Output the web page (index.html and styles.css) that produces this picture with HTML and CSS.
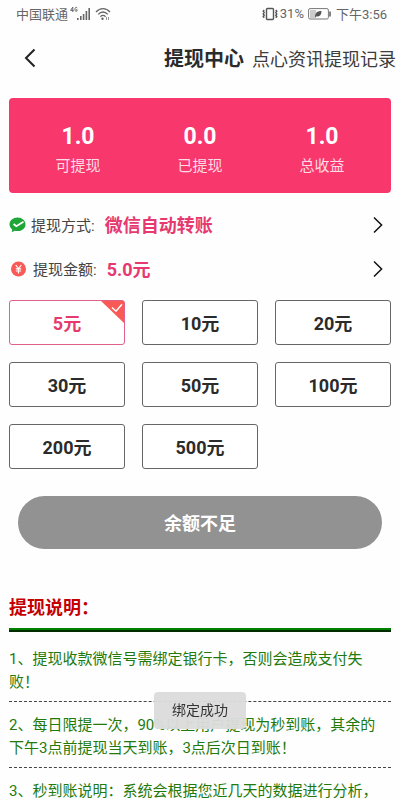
FILE: index.html
```html
<!DOCTYPE html>
<html lang="zh-CN">
<head>
<meta charset="utf-8">
<meta name="viewport" content="width=device-width, initial-scale=1">
<title>提现中心</title>
<link rel="stylesheet" href="styles.css">
</head>
<body>
<div class="status">
  <div class="status-side">
    <span class="carrier">中国联通</span>
    <svg class="signal" width="21" height="16" viewBox="0 0 21 16" aria-hidden="true">
      <g fill="none" stroke="#666" stroke-width="1"><path d="M2.8 6V1L.6 4.4h3"/><path d="M7.2 2.2C6.8.8 5 .8 5 3.4s2.2 2.8 2.2.4H6"/></g>
      <g fill="#666"><path d="M7 12h1.600v2H7zM10 10h1.600v4H10zM12.800 8h1.600v6h-1.600zM15.600 5h1.600v9h-1.600zM18.400 2h1.600v12h-1.600z"/></g>
    </svg>
    <svg class="wifi" width="16" height="14" viewBox="0 0 16 14" aria-hidden="true">
      <g fill="none" stroke="#666" stroke-width="1.300"><path d="M1 5c4-4.600 10-4.600 14 0"/><path d="M3.200 7.400c3-3.200 6.600-3.200 9.600 0"/><path d="M5.400 9.700c1.600-1.700 3.600-1.700 5.200 0"/></g>
      <circle cx="7.500" cy="11.800" r="1.200" fill="#666"/><path d="M11.500 10v3M13.500 10v3" stroke="#999"/>
    </svg>
  </div>
  <div class="status-side">
    <svg width="16" height="14" viewBox="0 0 16 14" fill="none" stroke="#555" aria-hidden="true">
      <rect x="4.500" y="1.500" width="7" height="11" rx="1" stroke-width="1.400"/>
      <path d="M2.200 3l-1 1.300 1 1.300-1 1.300 1 1.300-1 1.300 1 1.300M13.800 3l1 1.300-1 1.300 1 1.300-1 1.300 1 1.300-1 1.300" stroke-width="1.400"/>
    </svg>
    <span>31%</span>
    <svg class="battery" width="24" height="12" viewBox="0 0 24 12" aria-hidden="true">
      <rect x=".6" y=".6" width="19.800" height="10.400" rx="1.500" fill="none" stroke="#777"/>
      <path d="M2 2h6v8H2z" fill="#ccc"/><path d="M22 3.500v5" stroke="#666" stroke-width="1.600"/>
      <path d="M7 9.500c0-4.500 2-6.500 6.500-6.500 0 4-2 6-5.500 5.500z" fill="#555"/>
    </svg>
    <span>下午3:56</span>
  </div>
</div>

<header class="header">
  <button class="back" type="button" aria-label="返回">
    <svg width="12" height="20" viewBox="0 0 12 20" fill="none" stroke="#222" stroke-width="2"><path d="M10.500 1.500L2 10l8.500 8.500"/></svg>
  </button>
  <h1 class="title">提现中心</h1>
  <a class="records" href="#records">点心资讯提现记录</a>
</header>

<main class="content">
  <section class="summary">
    <div class="stat"><strong class="stat-value">1.0</strong><span class="stat-label">可提现</span></div>
    <div class="stat"><strong class="stat-value">0.0</strong><span class="stat-label">已提现</span></div>
    <div class="stat"><strong class="stat-value">1.0</strong><span class="stat-label">总收益</span></div>
  </section>

  <a class="row" href="#method">
    <svg width="17" height="16" viewBox="0 0 17 16" aria-hidden="true">
      <path d="M8.500 .5C4 .5.5 3.500.5 7.300c0 2.200 1 3.900 2.700 5.100L2.800 15.200l2.900-1.500c.9.3 1.800.4 2.800.4 4.500 0 8-2.900 8-6.700S13 .5 8.500 .5z" fill="#1fa637"/>
      <path d="M4.600 7l2.700 2.200 7.200-4.500" fill="none" stroke="#fff" stroke-width="1.800"/>
    </svg>
    <span class="row-label">提现方式:</span>
    <strong class="row-value">微信自动转账</strong>
    <svg class="chevron" width="10" height="18" viewBox="0 0 10 18" fill="none" stroke="#111" stroke-width="1.500" aria-hidden="true"><path d="M1 1.500L8.600 9 1 16.500"/></svg>
  </a>
  <a class="row" href="#amount">
    <svg class="coin" width="17" height="16" viewBox="0 0 17 16" aria-hidden="true">
      <circle cx="9.500" cy="8" r="7.500" fill="#f95a56"/>
      <path d="M6.700 4l2.800 3.500L12.300 4M9.500 7.500v5M6.800 7.800h5.400M6.800 10h5.400" fill="none" stroke="#fff" stroke-width="1.200"/>
    </svg>
    <span class="row-label">提现金额:</span>
    <strong class="row-value">5.0元</strong>
    <svg class="chevron" width="10" height="18" viewBox="0 0 10 18" fill="none" stroke="#111" stroke-width="1.500" aria-hidden="true"><path d="M1 1.500L8.600 9 1 16.500"/></svg>
  </a>

  <div class="amounts">
    <button class="amount selected" type="button" aria-pressed="true">5元
      <svg class="corner" width="23" height="22" viewBox="0 0 23 22" aria-hidden="true"><path d="M0 0h23v22z" fill="#f95a56"/><path d="M11 6.500l4 3.700 6-7" fill="none" stroke="#fff" stroke-width="1.500"/></svg>
    </button>
    <button class="amount" type="button">10元</button>
    <button class="amount" type="button">20元</button>
    <button class="amount" type="button">30元</button>
    <button class="amount" type="button">50元</button>
    <button class="amount" type="button">100元</button>
    <button class="amount" type="button">200元</button>
    <button class="amount" type="button">500元</button>
  </div>

  <button class="submit" type="button">余额不足</button>

  <section>
    <h2 class="notes-title">提现说明：</h2>
    <ul class="notes">
      <li class="note">1、提现收款微信号需绑定银行卡，否则会造成支付失<br>败！</li>
      <li class="note">2、每日限提一次，90%以上用户提现为秒到账，其余的<br>下午3点前提现当天到账，3点后次日到账！</li>
      <li class="note">3、秒到账说明：系统会根据您近几天的数据进行分析，</li>
    </ul>
  </section>
</main>
<div class="toast" role="status">绑定成功</div>
</body>
</html>
```

FILE: styles.css
```css
* {
  box-sizing: border-box;
}

html {
  scrollbar-width: none;
}

body {
  margin: 0;
  background: #fefefe;
  color: #2b2b2b;
  font-family: Roboto, "Noto Sans CJK SC", sans-serif;
}

button {
  font: inherit;
  padding: 0;
  cursor: pointer;
}

a {
  color: inherit;
  text-decoration: none;
}

.status {
  display: flex;
  justify-content: space-between;
  align-items: center;
  height: 27px;
  padding: 0 13px 0 16px;
  font-size: 13px;
  color: #666;
}

.status-side {
  display: flex;
  align-items: center;
  gap: 2px;
}

.wifi {
  margin-left: 2px;
}

.battery {
  margin: 0 2px;
}

.header {
  display: grid;
  grid-template-columns: 1fr auto 1fr;
  align-items: center;
  height: 61px;
  padding: 0 4px 0 14px;
  column-gap: 8px;
}

.back {
  display: flex;
  justify-self: start;
  padding: 0 10px;
  border: 0;
  background: none;
}

.title {
  margin: 0;
  font-size: 20px;
  font-weight: 700;
}

.records {
  font-size: 18px;
  color: #3c3c3c;
  white-space: nowrap;
}

.content {
  padding: 10px 9px 0;
}

.summary {
  display: grid;
  grid-template-columns: repeat(3, 1fr);
  margin-bottom: 10px;
  padding: 24px 8px 13px;
  border-radius: 4px;
  background: #f8376d;
  color: #fff;
}

.stat {
  display: flex;
  flex-direction: column;
  align-items: center;
}

.stat-value {
  font-size: 23px;
  line-height: 30px;
}

.stat-label {
  font-size: 15px;
  line-height: 28px;
  color: #ffdbe5;
}

.row {
  display: flex;
  align-items: center;
  height: 44px;
  padding-right: 8px;
}

.row-label {
  margin: 0 10px 0 5px;
  font-size: 15px;
  color: #444;
}

.row-label,
.row-value {
  padding-bottom: 2px;
}

.coin + .row-label {
  margin-left: 7px;
}

.row-value {
  font-size: 18px;
  color: #e5396f;
}

.chevron {
  margin-left: auto;
}

.amounts {
  display: grid;
  grid-template-columns: repeat(3, 1fr);
  gap: 17px;
  margin-top: 9px;
}

.amount {
  position: relative;
  height: 45px;
  padding-bottom: 2px;
  border: 1px solid #666;
  border-radius: 3px;
  background: #fff;
  color: #2b2b2b;
  font-size: 18px;
  font-weight: 700;
}

.amount.selected {
  border-color: #e06088;
  color: #e5396f;
}

.corner {
  position: absolute;
  top: 0;
  right: 0;
}

.submit {
  display: block;
  width: calc(100% - 18px);
  height: 53px;
  margin: 27px auto 0;
  padding-bottom: 2px;
  border: 0;
  border-radius: 27px;
  background: #929292;
  color: #fff;
  font-size: 18px;
  font-weight: 700;
}

.notes-title {
  margin: 45px 0 0;
  padding-bottom: 6px;
  border-bottom: 4px ridge #008000;
  color: #c40000;
  font-size: 18px;
  line-height: 28px;
}

.notes {
  margin: 0;
  padding: 4px 0 0;
  list-style: none;
}

.note {
  padding: 12px 0 7px;
  border-bottom: 1px dashed #444;
  color: #237a0c;
  font-size: 15px;
  line-height: 23px;
  white-space: nowrap;
}

.note:last-child {
  border-bottom: 0;
  padding-bottom: 0;
}

.toast {
  position: fixed;
  bottom: 71px;
  left: 50%;
  transform: translateX(-50%);
  padding: 0 18px;
  border-radius: 4px;
  background: rgba(220, 220, 220, 0.96);
  color: #333;
  font-size: 14px;
  line-height: 37px;
  white-space: nowrap;
}
```
